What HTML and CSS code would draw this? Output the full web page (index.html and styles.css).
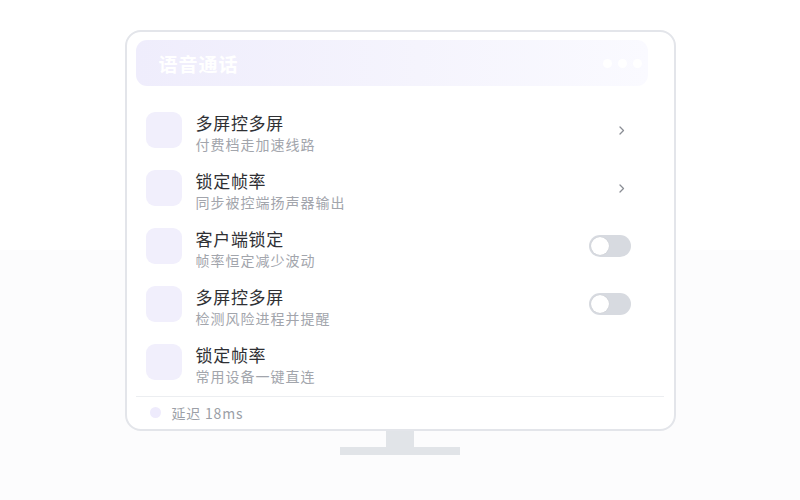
FILE: index.html
```html
<!DOCTYPE html>
<html lang="zh-CN">
<head>
<meta charset="utf-8">
<title>语音通话</title>
<link rel="stylesheet" href="styles.css">
</head>
<body>
<div class="scene">
  <div class="monitor">
    <div class="header">
      <span class="header-title">语音通话</span>
      <span class="header-dots"><i></i><i></i><i></i></span>
    </div>
    <ul class="list">
      <li class="row">
        <span class="icon"></span>
        <div class="text"><div class="title">多屏控多屏</div><div class="sub">付费档走加速线路</div></div>
        <svg class="chev" width="6" height="9" viewBox="0 0 6 9"><path d="M1 1l3.5 3.5L1 8" fill="none" stroke="#8a8d94" stroke-width="1.3" stroke-linecap="round" stroke-linejoin="round"/></svg>
      </li>
      <li class="row">
        <span class="icon"></span>
        <div class="text"><div class="title">锁定帧率</div><div class="sub">同步被控端扬声器输出</div></div>
        <svg class="chev" width="6" height="9" viewBox="0 0 6 9"><path d="M1 1l3.5 3.5L1 8" fill="none" stroke="#8a8d94" stroke-width="1.3" stroke-linecap="round" stroke-linejoin="round"/></svg>
      </li>
      <li class="row">
        <span class="icon"></span>
        <div class="text"><div class="title">客户端锁定</div><div class="sub">帧率恒定减少波动</div></div>
        <span class="toggle"><span class="knob"></span></span>
      </li>
      <li class="row">
        <span class="icon"></span>
        <div class="text"><div class="title">多屏控多屏</div><div class="sub">检测风险进程并提醒</div></div>
        <span class="toggle"><span class="knob"></span></span>
      </li>
      <li class="row">
        <span class="icon"></span>
        <div class="text"><div class="title">锁定帧率</div><div class="sub">常用设备一键直连</div></div>
      </li>
    </ul>
    <div class="footer">
      <span class="dot"></span>
      <span class="latency">延迟 18ms</span>
    </div>
  </div>
  <div class="neck"></div>
  <div class="base"></div>
</div>
</body>
</html>
```

FILE: styles.css
```css
* { box-sizing: border-box; }
html, body { margin: 0; padding: 0; }
body {
  width: 800px;
  height: 500px;
  overflow: hidden;
  background: linear-gradient(180deg, #ffffff 0, #ffffff 50%, #fcfcfd 50%, #fcfcfd 100%);
  font-family: "Noto Sans CJK SC", "Noto Sans", sans-serif;
}
.scene {
  display: flex;
  flex-direction: column;
  align-items: center;
  padding-top: 30px;
}
.monitor {
  width: 551px;
  height: 401px;
  border: 2px solid #e3e5ea;
  border-radius: 16px;
  background: #ffffff;
  padding: 8px 10px 0 9px;
  display: flex;
  flex-direction: column;
}
.header {
  width: 512px;
  height: 46px;
  border-radius: 11px;
  background: linear-gradient(90deg, #efedfc 0%, #f5f4fd 55%, #fafaff 100%);
  display: flex;
  align-items: center;
  justify-content: space-between;
  padding: 0 6px 0 23px;
}
.header-title {
  color: #ffffff;
  font-size: 19px;
  font-weight: 700;
  letter-spacing: 1px;
}
.header-dots {
  display: flex;
  gap: 6px;
}
.header-dots i {
  width: 9px;
  height: 9px;
  border-radius: 50%;
  background: #ffffff;
}
.list {
  list-style: none;
  margin: 15px 0 0 0;
  padding: 0;
}
.row {
  height: 58px;
  display: flex;
  align-items: center;
  padding: 0 33px 0 10px;
}
.icon {
  width: 36px;
  height: 36px;
  border-radius: 9px;
  background: #f1effc;
  flex-shrink: 0;
}
.text {
  margin-left: 14px;
  padding-top: 6px;
  flex: 1;
}
.title {
  font-size: 17px;
  line-height: 22px;
  letter-spacing: 0.7px;
  color: #2f3034;
}
.sub {
  margin-top: 1px;
  font-size: 14px;
  line-height: 19px;
  letter-spacing: 1px;
  color: #a2a5ac;
}
.chev {
  margin-right: 6px;
}
.toggle {
  width: 42px;
  height: 22px;
  border-radius: 11px;
  background: #d7dae0;
  display: flex;
  align-items: center;
  padding-left: 2px;
}
.knob {
  width: 18px;
  height: 18px;
  border-radius: 50%;
  background: #ffffff;
  box-shadow: 0 0 1px rgba(0,0,0,0.15);
}
.footer {
  margin-top: 5px;
  border-top: 1px solid #eceef1;
  height: 32px;
  display: flex;
  align-items: center;
  padding-left: 14px;
}
.dot {
  width: 11px;
  height: 11px;
  border-radius: 50%;
  background: #eeebfc;
}
.latency {
  margin-left: 11px;
  font-size: 14px;
  letter-spacing: 0.8px;
  color: #9c9fa7;
}
.neck {
  width: 28px;
  height: 16px;
  background: #e1e4e8;
}
.base {
  width: 120px;
  height: 8px;
  background: #e1e4e8;
}
```
